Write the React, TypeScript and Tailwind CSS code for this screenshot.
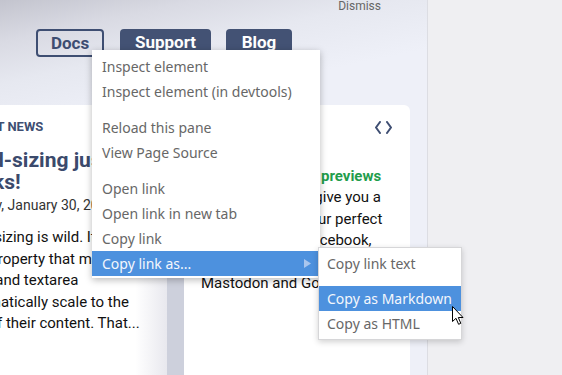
import React from 'react';

const menuFont = { fontFamily: '"Noto Sans", "DejaVu Sans", sans-serif' };

const MenuItem = ({ label, active = false, arrow = false }: { label: string; active?: boolean; arrow?: boolean }) => (
  <div
    className={`flex items-center justify-between h-[25px] pl-[10px] pr-[9px] text-[14px] ${
      active ? 'bg-[#4d91de] text-[#f4f7fc]' : 'text-[#676767]'
    }`}
  >
    <span>{label}</span>
    {arrow && (
      <svg width="7" height="9" viewBox="0 0 7 9">
        <path d="M0 0 L7 4.5 L0 9 Z" fill="#a9c6ee" />
      </svg>
    )}
  </div>
);

const Sep = ({ h }: { h: string }) => <div className={h} />;

const App = () => {
  return (
    <div
      className="relative flex h-[375px] w-[562px] overflow-hidden"
      style={{ fontFamily: 'Roboto, "Liberation Sans", sans-serif' }}
    >
      {/* page pane */}
      <div className="relative w-[427px] shrink-0 overflow-hidden bg-[linear-gradient(168deg,#c3c4ce_0%,#d9dae3_9%,#e6e8f0_18%,#eef0f8_30%,#eef0f8_100%)]">
        <div className="flex justify-end pr-[46px] h-[14px]">
          <span className="text-[12px] leading-[12px] text-[#666]">Dismiss</span>
        </div>

        <div className="flex gap-4 pl-[36px] mt-[15px]">
          <button className="h-[28px] w-[68px] rounded-[4px] border-2 border-[#3e4e72] text-[17px] font-bold text-[#3e4e72]">
            Docs
          </button>
          <button className="h-[28px] w-[91px] rounded-[4px] bg-[#435274] text-[17px] font-bold text-white">
            Support
          </button>
          <button className="ml-[-1px] h-[28px] w-[66px] rounded-[4px] bg-[#435274] text-[17px] font-bold text-white">
            Blog
          </button>
        </div>

        {/* cards */}
        <div className="flex ml-[-59px] mt-[48px] h-[300px]">
          <div className="w-[226px] shrink-0 rounded-t-[6px] bg-[linear-gradient(to_right,#ffffff_86%,#e8e8ee)] px-[17px] pt-[14px]">
            <div className="text-[13px] font-bold leading-[16px] text-[#3e4e72]">LATEST NEWS</div>
            <div className="mt-[14px] text-[21px] font-bold leading-[22px] text-[#3b4a6c]">
              Field-sizing just
              <br />
              works!
            </div>
            <div className="ml-[-8px] mt-[3px] text-[14px] leading-[18px] text-[#333]">Tuesday, January 30, 2024</div>
            <div className="mt-[13px] text-[15px] leading-[21.5px] text-[#111]">
              Field-sizing is wild. It's a
              <br />
              CSS property that makes
              <br />
              input and textarea
              <br />
              automatically scale to the
              <br />
              size of their content. That...
            </div>
          </div>
          <div className="w-[17px] shrink-0 bg-[#cdd0dc]" />
          <div className="w-[226px] shrink-0 rounded-t-[6px] bg-white pl-[17px] pr-[18px] pt-[16px]">
            <div className="flex justify-end">
              <svg width="17" height="13" viewBox="0 0 17 13" fill="none" stroke="#3e4e72" strokeWidth="2" strokeLinecap="round">
                <path d="M5 1 L1 6.5 L5 12" />
                <path d="M12 1 L16 6.5 L12 12" />
              </svg>
            </div>
            <div className="mt-[32px] whitespace-nowrap text-[15px] font-bold leading-[20px] text-[#1f9d4c]">
              Open Graph's link previews
            </div>
            <div className="mt-[1px] whitespace-nowrap text-[15px] leading-[21.5px] text-[#111]">
              Link previews all give you a
              <br />
              a clear peek of your perfect
              <br />
              appearance on Facebook,
              <br />
              Telegram (web), LinkedIn,
              <br />
              Mastodon and Google.
            </div>
          </div>
        </div>
      </div>

      <div className="flex-1 border-l border-[#dcdde3] bg-[#efeff2]" />

      {/* context menu */}
      <div
        className="absolute left-[92px] top-[50px] w-[228px] bg-white pt-[4px] pb-[2px] shadow-[0_2px_7px_rgba(0,0,0,0.28)]"
        style={menuFont}
      >
        <MenuItem label="Inspect element" />
        <MenuItem label="Inspect element (in devtools)" />
        <Sep h="h-[11px]" />
        <MenuItem label="Reload this pane" />
        <MenuItem label="View Page Source" />
        <Sep h="h-[11px]" />
        <MenuItem label="Open link" />
        <MenuItem label="Open link in new tab" />
        <MenuItem label="Copy link" />
        <MenuItem label="Copy link as..." active arrow />
      </div>

      {/* submenu */}
      <div
        className="absolute left-[318px] top-[247px] w-[144px] border border-[#d6d6d8] bg-white pt-[3px] pb-[3px] shadow-[0_2px_6px_rgba(0,0,0,0.18)]"
        style={menuFont}
      >
        <div className="flex h-[25px] items-center pl-[8px] text-[14px] text-[#676767]">Copy link text</div>
        <div className="h-[10px]" />
        <div className="flex h-[25px] items-center bg-[#4d91de] pl-[8px] text-[14px] text-[#f4f7fc]">Copy as Markdown</div>
        <div className="flex h-[25px] items-center pl-[8px] text-[14px] text-[#676767]">Copy as HTML</div>
      </div>

      {/* mouse pointer */}
      <svg className="absolute left-[452px] top-[306px]" width="12" height="20" viewBox="0 0 12 20">
        <path
          d="M0.5 0.5 L0.5 15.5 L4 12.3 L6.6 18.3 L8.8 17.3 L6.3 11.5 L11 11.5 Z"
          fill="#fff"
          stroke="#000"
          strokeWidth="1"
          strokeLinejoin="round"
        />
      </svg>
    </div>
  );
};

export default App;
